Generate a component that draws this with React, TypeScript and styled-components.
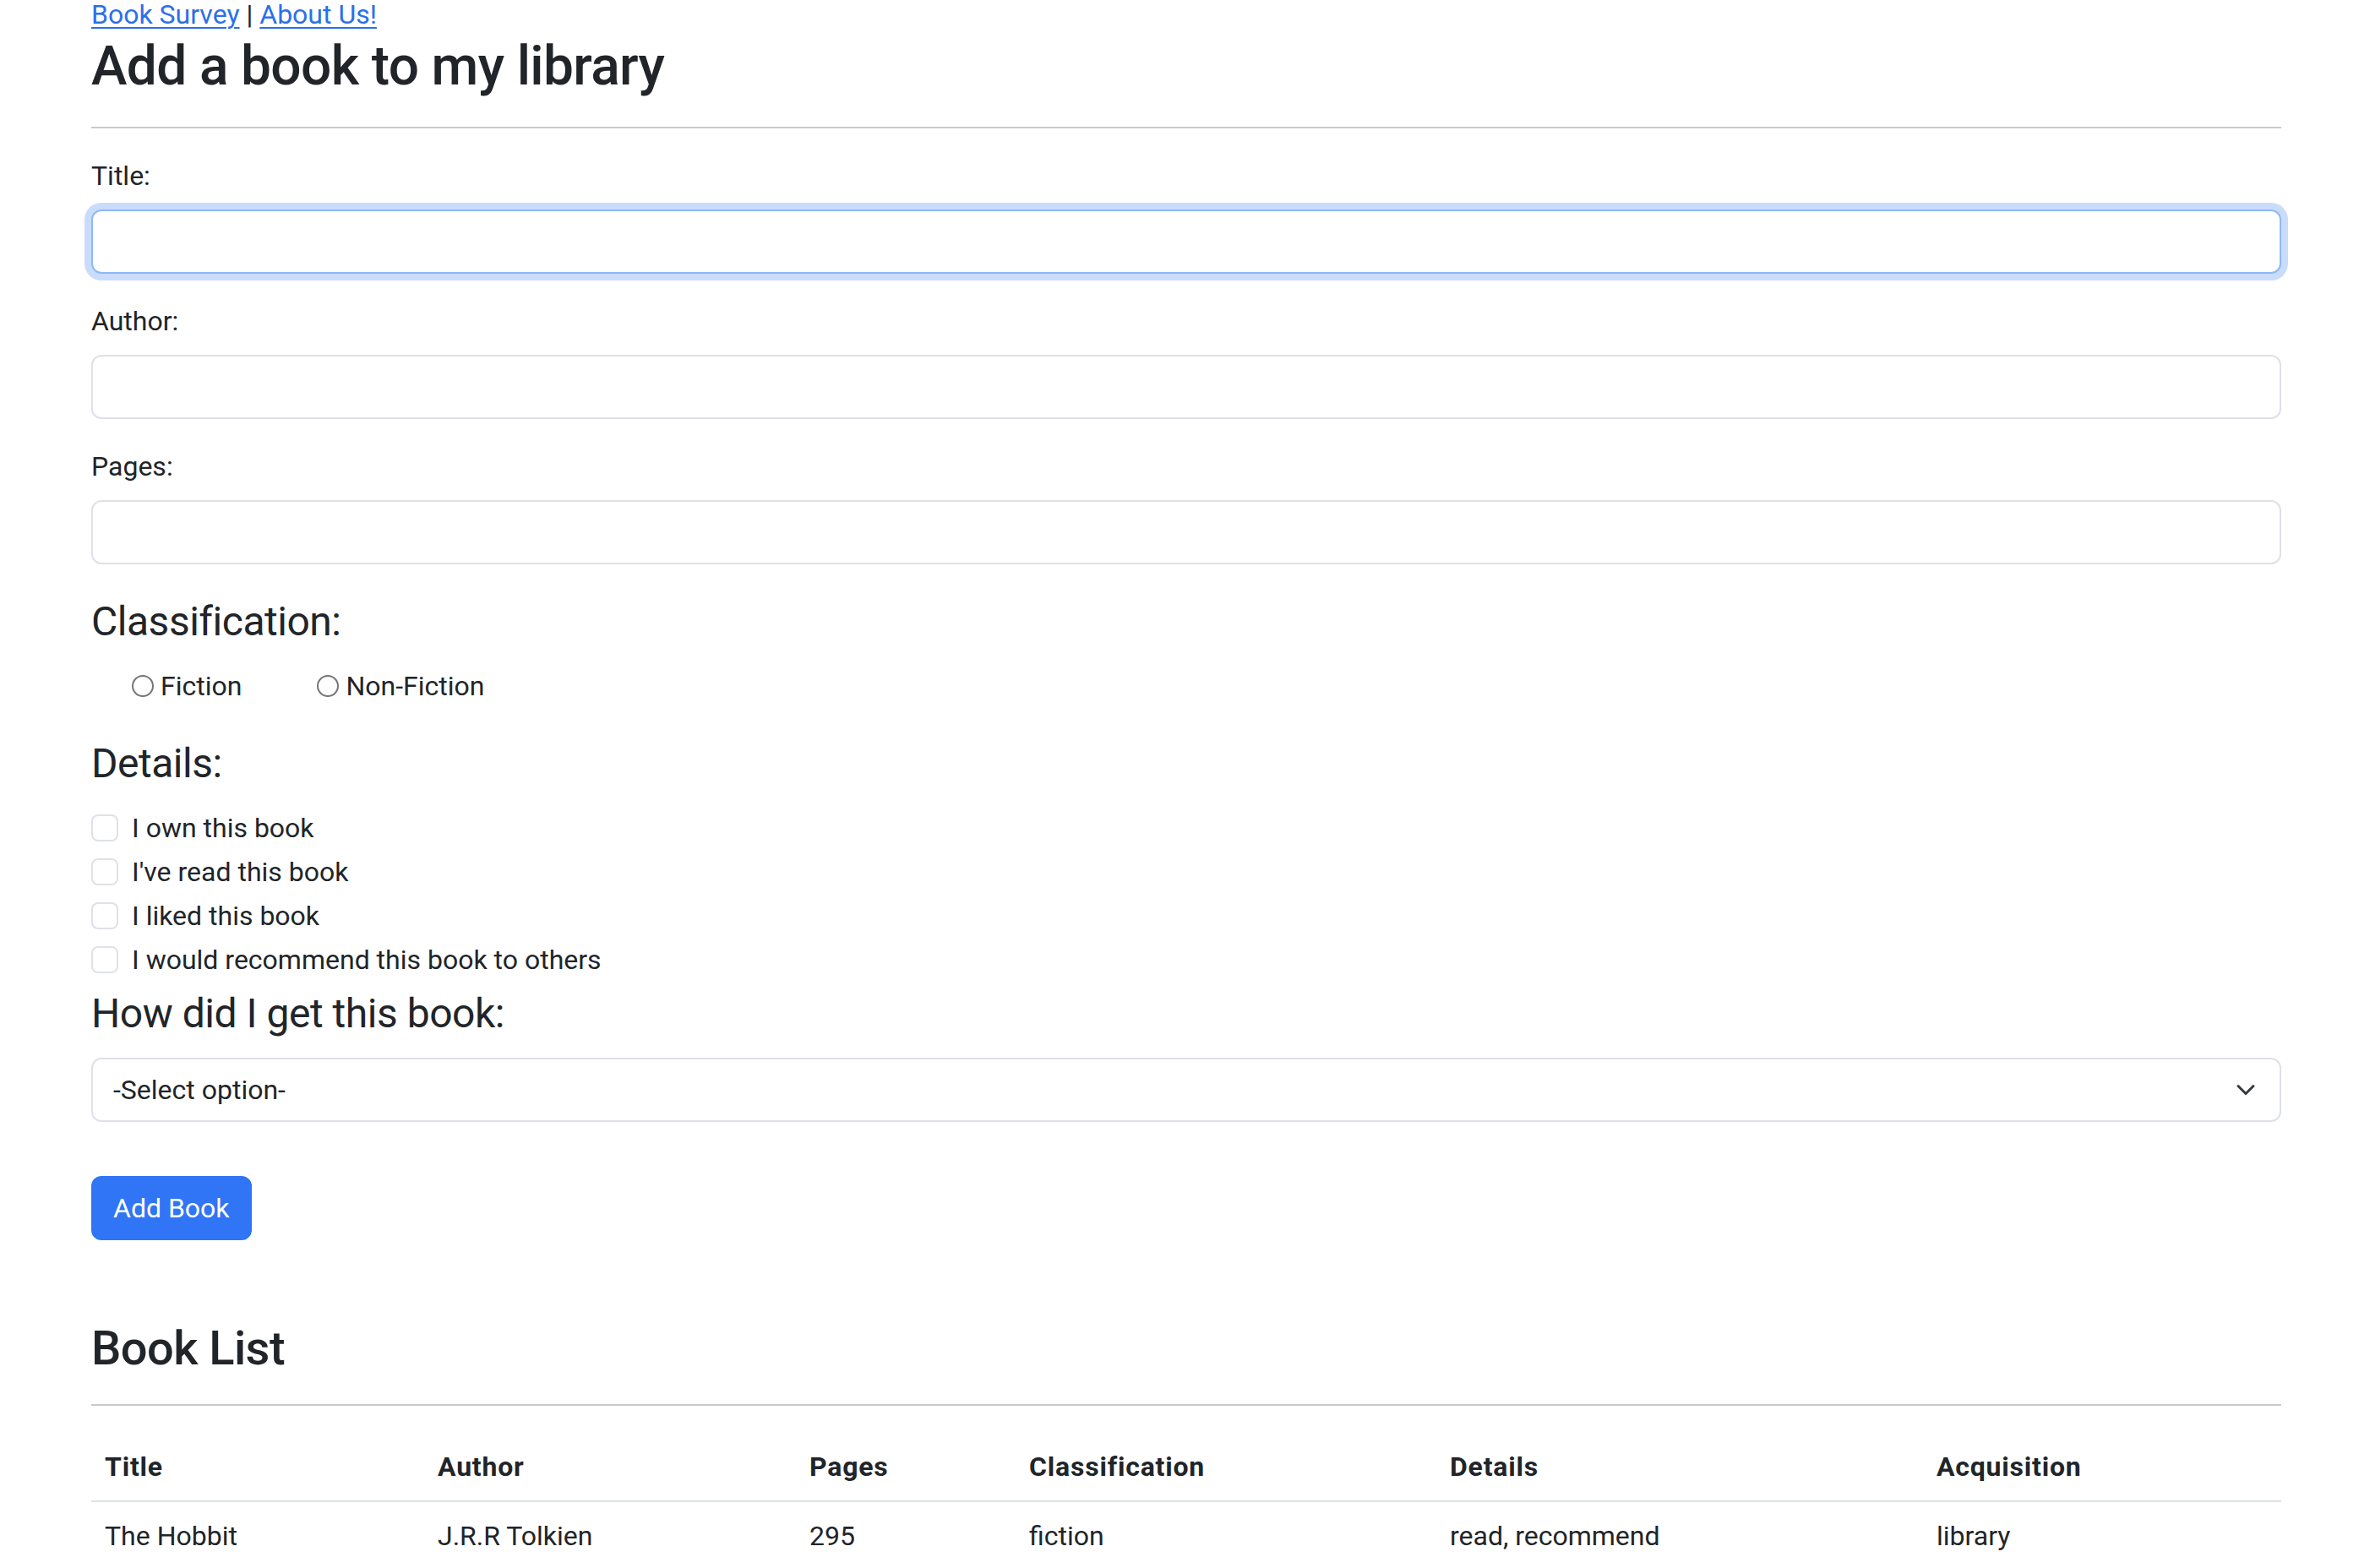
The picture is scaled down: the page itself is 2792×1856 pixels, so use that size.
import React from "react";
import styled, { createGlobalStyle } from "styled-components";

const FONT = `Roboto, "Liberation Sans", Arial, sans-serif`;

const GlobalStyle = createGlobalStyle`
  *, *::before, *::after { box-sizing: border-box; }
  html, body { margin: 0; padding: 0; background: #ffffff; }
  body {
    font-family: ${FONT};
    font-size: 32px;
    line-height: 1.5;
    color: #212529;
    -webkit-font-smoothing: antialiased;
  }
`;

const Container = styled.div`
  width: 2592px;
  margin-left: 108px;
  padding-bottom: 40px;
`;

const Nav = styled.nav`
  line-height: 34px;
  margin-bottom: 7px;
`;

const NavLink = styled.a`
  color: #2c6fec;
  text-decoration: underline;
  text-underline-offset: 4px;
  text-decoration-thickness: 2px;
`;

const Separator = styled.span`
  color: #212529;
`;

const PageTitle = styled.h2`
  margin: 0;
  font-size: 64px;
  font-weight: 500;
  line-height: 1.2;
  letter-spacing: -0.01em;
`;

const Divider = styled.hr`
  margin: 32px 0;
  height: 2px;
  border: 0;
  background: #c8c9ca;
`;

const Form = styled.form`
  display: flex;
  flex-direction: column;
`;

const FieldGroup = styled.div<{ $mb?: number }>`
  display: flex;
  flex-direction: column;
  margin-bottom: ${(p) => p.$mb ?? 32}px;
`;

const FieldLabel = styled.label`
  display: block;
  line-height: 48px;
  margin-bottom: 16px;
`;

const TextInput = styled.input<{ $focused?: boolean }>`
  display: block;
  width: 100%;
  height: 76px;
  padding: 12px 24px;
  font-family: ${FONT};
  font-size: 32px;
  line-height: 48px;
  color: #212529;
  background: #fff;
  border: 2px solid ${(p) => (p.$focused ? "#8db8f9" : "#dee2e6")};
  border-radius: 12px;
  outline: none;
  box-shadow: ${(p) => (p.$focused ? "0 0 0 8px #cadcfb" : "none")};
`;

const SectionTitle = styled.div`
  font-size: 48px;
  line-height: 72px;
  font-weight: 400;
  letter-spacing: -0.01em;
  margin-bottom: 16px;
`;

const RadioGroup = styled.div`
  display: flex;
  align-items: center;
  height: 48px;
  padding-left: 48px;
`;

const RadioOption = styled.label`
  display: inline-flex;
  align-items: center;
  gap: 8px;
  margin-right: 89px;
`;

const Radio = styled.input`
  appearance: none;
  -webkit-appearance: none;
  width: 26px;
  height: 26px;
  margin: 0;
  border: 2px solid #767676;
  border-radius: 50%;
  background: #fff;
`;

const CheckList = styled.div`
  display: flex;
  flex-direction: column;
`;

const CheckRow = styled.label`
  display: flex;
  align-items: flex-start;
  line-height: 48px;
  min-height: 48px;
  margin-bottom: 4px;
`;

const Checkbox = styled.input`
  appearance: none;
  -webkit-appearance: none;
  flex: none;
  width: 32px;
  height: 32px;
  margin: 8px 16px 0 0;
  border: 2px solid #dee2e6;
  border-radius: 8px;
  background: #fff;
`;

const SelectWrap = styled.div`
  position: relative;
  width: 100%;
`;

const Select = styled.select`
  display: block;
  width: 100%;
  height: 76px;
  padding: 12px 72px 12px 24px;
  font-family: ${FONT};
  font-size: 32px;
  line-height: 48px;
  color: #212529;
  background: #fff;
  border: 2px solid #dee2e6;
  border-radius: 12px;
  appearance: none;
  -webkit-appearance: none;
  outline: none;
`;

const Chevron = styled.svg`
  position: absolute;
  right: 30px;
  top: 50%;
  width: 24px;
  height: 24px;
  transform: translateY(-50%);
  pointer-events: none;
`;

const PrimaryButton = styled.button`
  align-self: flex-start;
  margin-top: 0;
  height: 76px;
  padding: 12px 24px;
  font-family: ${FONT};
  font-size: 32px;
  line-height: 48px;
  font-weight: 400;
  color: #ffffff;
  background: #2f75f6;
  border: 2px solid #2f75f6;
  border-radius: 12px;
`;

const ListTitle = styled.h3`
  margin: 95px 0 0;
  font-size: 56px;
  font-weight: 500;
  line-height: 1.2;
  letter-spacing: -0.01em;
`;

const Table = styled.table`
  width: 100%;
  border-collapse: collapse;
  table-layout: fixed;
`;

const HeadCell = styled.th<{ $width: number }>`
  width: ${(p) => p.$width}px;
  padding: 16px;
  text-align: left;
  font-weight: 700;
  line-height: 48px;
  letter-spacing: 0.025em;
  border-bottom: 2px solid #dee2e6;
`;

const BodyCell = styled.td`
  padding: 16px;
  line-height: 48px;
  border-bottom: 2px solid #dee2e6;
`;

const columns = [
  { label: "Title", width: 394 },
  { label: "Author", width: 440 },
  { label: "Pages", width: 260 },
  { label: "Classification", width: 498 },
  { label: "Details", width: 576 },
  { label: "Acquisition", width: 424 },
];

const books = [
  ["The Hobbit", "J.R.R Tolkien", "295", "fiction", "read, recommend", "library"],
];

const details = [
  "I own this book",
  "I've read this book",
  "I liked this book",
  "I would recommend this book to others",
];

export default function App() {
  return (
    <>
      <GlobalStyle />
      <Container>
        <Nav>
          <NavLink href="#survey">Book Survey</NavLink>
          <Separator> | </Separator>
          <NavLink href="#about">About Us!</NavLink>
        </Nav>
        <PageTitle>Add a book to my library</PageTitle>
        <Divider />
        <Form onSubmit={(e) => e.preventDefault()}>
          <FieldGroup>
            <FieldLabel htmlFor="title">Title:</FieldLabel>
            <TextInput id="title" type="text" $focused />
          </FieldGroup>
          <FieldGroup>
            <FieldLabel htmlFor="author">Author:</FieldLabel>
            <TextInput id="author" type="text" />
          </FieldGroup>
          <FieldGroup>
            <FieldLabel htmlFor="pages">Pages:</FieldLabel>
            <TextInput id="pages" type="text" />
          </FieldGroup>
          <FieldGroup>
            <SectionTitle>Classification:</SectionTitle>
            <RadioGroup>
              <RadioOption>
                <Radio type="radio" name="classification" value="fiction" />
                Fiction
              </RadioOption>
              <RadioOption>
                <Radio type="radio" name="classification" value="nonfiction" />
                Non-Fiction
              </RadioOption>
            </RadioGroup>
          </FieldGroup>
          <FieldGroup $mb={0}>
            <SectionTitle>Details:</SectionTitle>
            <CheckList>
              {details.map((d) => (
                <CheckRow key={d}>
                  <Checkbox type="checkbox" />
                  {d}
                </CheckRow>
              ))}
            </CheckList>
          </FieldGroup>
          <FieldGroup $mb={64}>
            <SectionTitle>How did I get this book:</SectionTitle>
            <SelectWrap>
              <Select defaultValue="">
                <option value="">-Select option-</option>
                <option value="bought">bought</option>
                <option value="library">library</option>
                <option value="gift">gift</option>
              </Select>
              <Chevron viewBox="0 0 16 16">
                <path
                  d="m2 5 6 6 6-6"
                  fill="none"
                  stroke="#343a40"
                  strokeWidth="2"
                  strokeLinecap="round"
                  strokeLinejoin="round"
                />
              </Chevron>
            </SelectWrap>
          </FieldGroup>
          <PrimaryButton type="submit">Add Book</PrimaryButton>
        </Form>
        <ListTitle>Book List</ListTitle>
        <Divider />
        <Table>
          <thead>
            <tr>
              {columns.map((c) => (
                <HeadCell key={c.label} $width={c.width}>
                  {c.label}
                </HeadCell>
              ))}
            </tr>
          </thead>
          <tbody>
            {books.map((row) => (
              <tr key={row[0]}>
                {row.map((cell, i) => (
                  <BodyCell key={i}>{cell}</BodyCell>
                ))}
              </tr>
            ))}
          </tbody>
        </Table>
      </Container>
    </>
  );
}
